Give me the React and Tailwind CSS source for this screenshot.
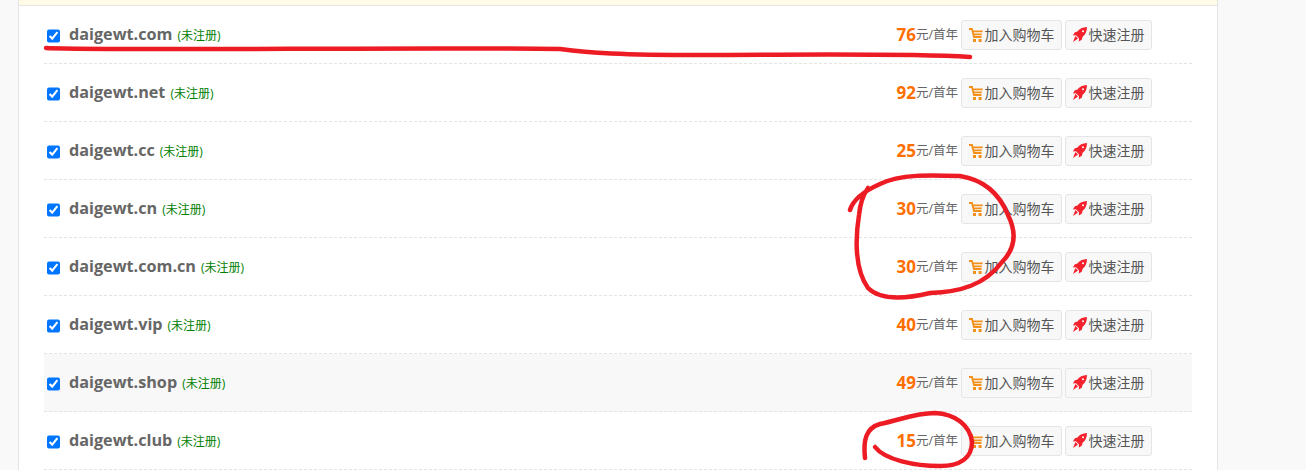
const font = { fontFamily: '"Open Sans", "Noto Sans CJK SC", sans-serif' };

const domains = [
  { name: "daigewt.com", price: 76 },
  { name: "daigewt.net", price: 92 },
  { name: "daigewt.cc", price: 25 },
  { name: "daigewt.cn", price: 30 },
  { name: "daigewt.com.cn", price: 30 },
  { name: "daigewt.vip", price: 40 },
  { name: "daigewt.shop", price: 49, hover: true },
  { name: "daigewt.club", price: 15 },
];

function CartIcon() {
  return (
    <svg width="14" height="14" viewBox="0 0 14 14" className="shrink-0">
      <path d="M0 1h3l2 8h7.5" fill="none" stroke="#f39019" strokeWidth="1.8" />
      <path d="M3.4 2.4h10.6l-.6 1.8H3.9zM4.4 5.6h8.6l-.5 1.7H4.8z" fill="#f39019" />
      <rect x="4" y="11" width="3" height="3" fill="#f39019" />
      <rect x="9.6" y="11" width="3" height="3" fill="#f39019" />
    </svg>
  );
}

function RocketIcon() {
  return (
    <svg width="14" height="15" viewBox="0 0 14 15" className="shrink-0">
      <path d="M14 0C9.5.2 6.4 1.8 4.4 4.6L1.6 5.4 0 8.6l3-.3 3 3-.2 3.2 3-1.8.8-3C12.4 7.6 14 4.4 14 0z" fill="#f5222d" />
      <circle cx="10" cy="4.2" r="1" fill="#fff" />
      <path d="M2.4 9 5 11.6 0 15z" fill="#f5222d" />
    </svg>
  );
}

function DomainRow({ name, price, hover }) {
  return (
    <div
      className={
        "h-[58px] flex items-center border-b border-dashed border-[#e3e3e3] pl-[3px] pr-10 " +
        (hover ? "bg-[#f8f8f8]" : "")
      }
    >
      <input type="checkbox" defaultChecked className="w-[13px] h-[14px] m-0 mt-[2px] shrink-0" />
      <span className="ml-[9px] text-[16.2px] font-bold text-[#666]">{name}</span>
      <span className="ml-[5px] mt-[2px] text-xs text-[#008000]">(未注册)</span>
      <div className="ml-auto flex items-center">
        <span className="text-[17px] font-bold text-[#ff6f00]">{price}</span>
        <span className="mt-[1px] text-[12.5px] text-[#666]">元/首年</span>
        <button className="ml-[3px] w-[101px] h-[30px] flex items-center justify-center gap-[2px] bg-[#f8f8f8] border border-[#e5e5e5] rounded-[3px] text-sm text-[#555]">
          <CartIcon />
          加入购物车
        </button>
        <button className="ml-[3px] w-[87px] h-[30px] flex items-center justify-center gap-[2px] bg-[#f8f8f8] border border-[#e5e5e5] rounded-[3px] text-sm text-[#555]">
          <RocketIcon />
          快速注册
        </button>
      </div>
    </div>
  );
}

export default function App() {
  return (
    <div className="relative h-[470px] overflow-hidden bg-[#f9f9f9]" style={font}>
      <div className="ml-[18px] w-[1200px] h-full bg-white border-x border-[#e5e5e5]">
        <div className="h-[6px] bg-[#fffbe6] border-b border-[#e5e5e5]" />
        <div className="mx-[25px]">
          {domains.map((d) => (
            <DomainRow key={d.name} {...d} />
          ))}
        </div>
      </div>

      {/* marker scribbles on top of the screenshot */}
      <svg width="1306" height="470" className="absolute inset-0 pointer-events-none">
        <g fill="none" stroke="#ed1c24" strokeWidth="4.5" strokeLinecap="round" strokeLinejoin="round">
          <path d="M46 48C120 51 400 47 560 49C590 53 620 55 700 55C800 55 900 53 970 57" />
          <path d="M850 210C853 200 862 192 880 184C900 174 930 175 960 176C985 180 1000 195 1008 215C1018 235 1014 250 1002 262C985 285 960 292 930 293C905 299 880 300 868 288C855 270 855 240 859 215C860 205 863 195 868 188" />
          <path d="M865 458C863 440 866 428 880 424C900 420 915 413 935 413C955 414 970 425 972 442C972 458 960 466 940 466C915 466 885 460 875 447" />
        </g>
      </svg>
    </div>
  );
}
